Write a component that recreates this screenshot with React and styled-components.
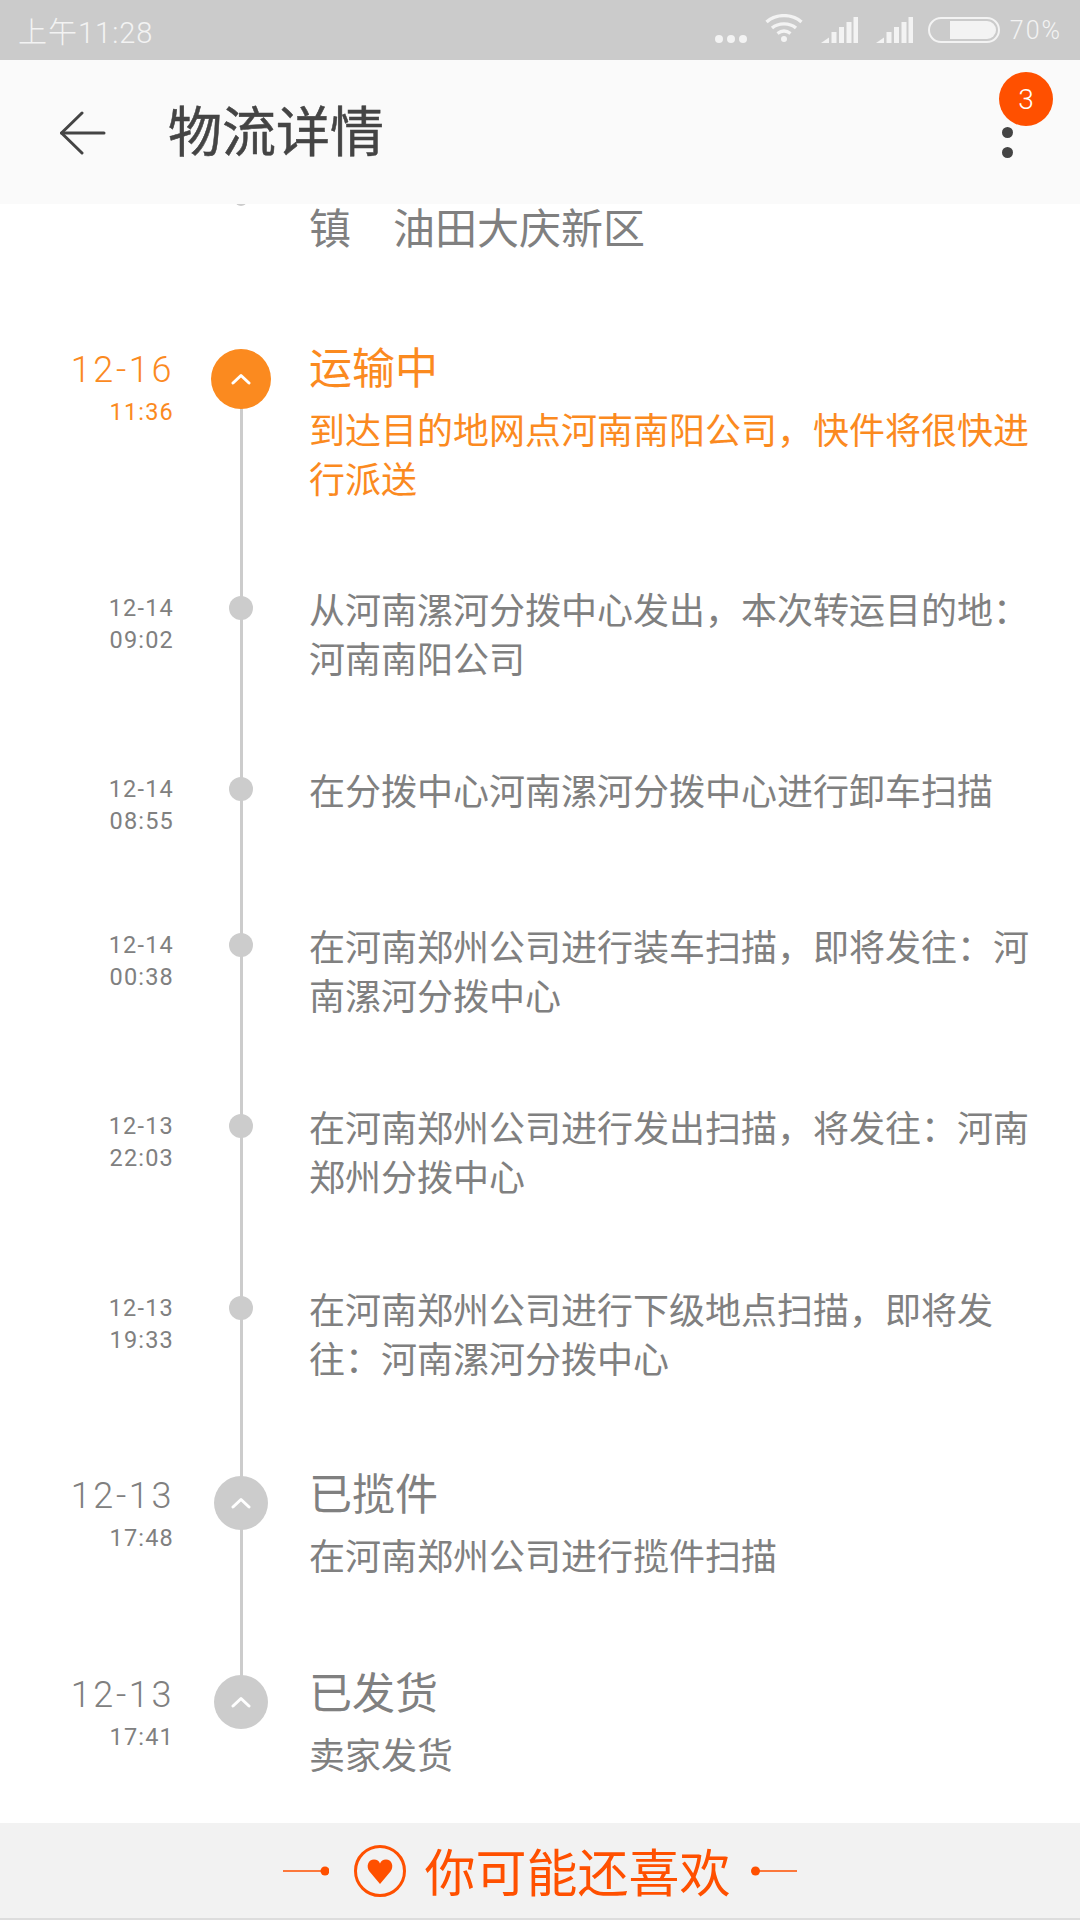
import React from 'react';
import styled, { createGlobalStyle } from 'styled-components';

const CJK = '"Noto Sans CJK SC", "Noto Sans", sans-serif';
const LATIN = 'Roboto, "Noto Sans CJK SC", sans-serif';
const ORANGE = '#fb8a1f';
const GREY = '#808080';
const NODE = '#cccccc';
const ACCENT = '#ff5000';

const Global = createGlobalStyle`
  html, body { margin: 0; padding: 0; background: #fff; }
  * { box-sizing: border-box; }
`;

const Page = styled.div`
  width: 1080px;
  height: 1920px;
  display: flex;
  flex-direction: column;
  overflow: hidden;
  background: #fff;
  font-family: ${CJK};
`;

const StatusBar = styled.div`
  height: 60px;
  flex: none;
  background: #cbcbcb;
  color: #f3f3f3;
  display: flex;
  align-items: center;
  padding: 0 18px 0 18px;
`;
const Clock = styled.div`
  font-family: ${LATIN};
  font-weight: 300;
  font-size: 29px;
  letter-spacing: 1px;
  flex: 1;
`;
const StatusIcons = styled.div`
  display: flex;
  align-items: center;
`;
const BatteryShell = styled.div`
  width: 72px;
  height: 26px;
  border: 2.5px solid #f3f3f3;
  border-radius: 13px;
  padding: 2px;
  margin-left: 15px;
  display: flex;
  justify-content: flex-end;
`;
const BatteryFill = styled.div`
  width: 46px;
  border-radius: 0 9px 9px 0;
  background: #f3f3f3;
`;
const Percent = styled.div`
  font-family: ${LATIN};
  font-weight: 300;
  font-size: 25px;
  letter-spacing: 2px;
  margin-left: 10px;
`;

const Header = styled.header`
  height: 144px;
  flex: none;
  background: #fafafa;
  display: flex;
  align-items: center;
  padding-left: 60px;
  position: relative;
  z-index: 1;
`;
const BackIcon = styled.svg`
  width: 46px;
  height: 44px;
  flex: none;
  margin-top: 2px;
`;
const Title = styled.h1`
  margin: -6px 0 0 62px;
  font-size: 54px;
  font-weight: 400;
  -webkit-text-stroke: 0.5px #444;
  color: #444;
  flex: 1;
  line-height: 1;
`;
const More = styled.div`
  width: 12px;
  margin: 20px 66px 0 0;
  display: flex;
  flex-direction: column;
  gap: 9px;
`;
const MoreDot = styled.span`
  width: 11px;
  height: 11px;
  border-radius: 50%;
  background: #444;
`;
const Badge = styled.div`
  position: absolute;
  left: 999px;
  top: 12px;
  width: 54px;
  height: 54px;
  border-radius: 50%;
  background: ${ACCENT};
  color: #fff;
  font-family: ${LATIN};
  font-weight: 300;
  font-size: 28px;
  display: flex;
  align-items: center;
  justify-content: center;
`;

const List = styled.main`
  flex: 1;
  min-height: 0;
  overflow: hidden;
`;
const Row = styled.section`
  display: grid;
  grid-template-columns: 174px 134px 732px;
  padding-bottom: ${p => p.$after}px;
  color: ${p => (p.$active ? ORANGE : GREY)};
`;
const TimeCol = styled.div`
  text-align: right;
  font-family: ${LATIN};
  padding-top: ${p => (p.$big ? 1 : 4)}px;
  min-height: 73px;
`;
const DateText = styled.div`
  font-weight: ${p => (p.$big ? 300 : 400)};
  font-size: ${p => (p.$big ? 36 : 23.5)}px;
  line-height: ${p => (p.$big ? 50 : 32)}px;
  letter-spacing: ${p => (p.$big ? 2.6 : 1.2)}px;
`;
const TimeText = styled.div`
  font-weight: 400;
  font-size: 23.5px;
  line-height: 32px;
  letter-spacing: 1.2px;
  margin-top: ${p => (p.$big ? 1 : 0)}px;
`;
const NodeCol = styled.div`
  position: relative;
  display: flex;
  justify-content: center;
  align-items: flex-start;
  &::before {
    content: '';
    display: ${p => (p.$rail ? 'block' : 'none')};
    position: absolute;
    left: 65.5px;
    top: 8px;
    bottom: ${p => -(p.$after + 10)}px;
    width: 3px;
    background: ${NODE};
  }
`;
const Dot = styled.div`
  position: relative;
  margin-top: ${p => p.$top}px;
  width: ${p => p.$size}px;
  height: ${p => p.$size}px;
  border-radius: 50%;
  background: ${p => (p.$active ? ORANGE : NODE)};
  display: flex;
  align-items: center;
  justify-content: center;
`;
const Content = styled.div`
  padding-left: 1px;
  margin-top: ${p => (p.$lead ? 0 : -4)}px;
`;
const Status = styled.div`
  font-size: 43px;
  line-height: 50px;
  margin: 0 0 14px 0;
`;
const Body = styled.div`
  font-size: ${p => (p.$lead ? 42 : 36)}px;
  line-height: ${p => (p.$lead ? 44 : 49)}px;
`;

const Footer = styled.footer`
  height: 97px;
  flex: none;
  background: #f2f2f2;
  border-bottom: 2px solid #dddddd;
  display: flex;
  align-items: center;
  justify-content: center;
  color: ${ACCENT};
`;
const FooterText = styled.div`
  font-size: 51px;
  line-height: 1;
  margin-left: 17px;
  margin-right: 20px;
`;
const Deco = styled.svg`
  width: 48px;
  height: 12px;
  flex: none;
`;
const HeartRing = styled.svg`
  width: 54px;
  height: 54px;
  flex: none;
  margin-left: 24px;
`;

const Chevron = () => (
  <svg width="20" height="12" viewBox="0 0 20 12" fill="none" stroke="#fff" strokeWidth="3" strokeLinecap="round" strokeLinejoin="round">
    <path d="M2 10 L10 2.5 L18 10" />
  </svg>
);

const Bars = () => (
  <svg width="37" height="26" viewBox="0 0 37 26" fill="#f3f3f3" style={{ marginLeft: 18 }}>
    <path d="M0 26 L8 20.5 V26 Z" />
    <rect x="10.5" y="15" width="5" height="11" />
    <rect x="18" y="10" width="5" height="16" />
    <rect x="25.5" y="5" width="5" height="21" />
    <rect x="32.5" y="0" width="4.5" height="26" />
  </svg>
);

const rows = [
  { date: '12-14', time: '09:02', body: '从河南漯河分拨中心发出，本次转运目的地：河南南阳公司', after: 87 },
  { date: '12-14', time: '08:55', body: '在分拨中心河南漯河分拨中心进行卸车扫描', after: 83 },
  { date: '12-14', time: '00:38', body: '在河南郑州公司进行装车扫描，即将发往：河南漯河分拨中心', after: 87 },
  { date: '12-13', time: '22:03', body: '在河南郑州公司进行发出扫描，将发往：河南郑州分拨中心', after: 88 },
  { date: '12-13', time: '19:33', body: '在河南郑州公司进行下级地点扫描，即将发往：河南漯河分拨中心', after: 88 },
];

export default function App() {
  return (
    <Page>
      <Global />
      <StatusBar>
        <Clock>上午11:28</Clock>
        <StatusIcons>
          <svg width="32" height="8" viewBox="0 0 32 8" fill="#f3f3f3" style={{ marginTop: 18 }}>
            <circle cx="4" cy="4" r="4" /><circle cx="16" cy="4" r="4" /><circle cx="28" cy="4" r="4" />
          </svg>
          <svg width="38" height="28" viewBox="0 0 38 28" fill="none" stroke="#f3f3f3" strokeWidth="3.4" style={{ marginLeft: 18, marginTop: -4 }}>
            <path d="M1.5 8 C11 -0.5 27 -0.5 36.5 8" />
            <path d="M7 14 C13.5 8.5 24.5 8.5 31 14" />
            <path d="M12.5 19.5 C16.5 16.5 21.5 16.5 25.5 19.5" />
            <circle cx="19" cy="25" r="3" fill="#f3f3f3" stroke="none" />
          </svg>
          <Bars />
          <Bars />
          <BatteryShell><BatteryFill /></BatteryShell>
          <Percent>70%</Percent>
        </StatusIcons>
      </StatusBar>

      <Header>
        <BackIcon viewBox="0 0 46 44" fill="none" stroke="#444" strokeWidth="3" strokeLinecap="round" strokeLinejoin="round">
          <path d="M22 2 L1.5 22 L22 42" />
          <path d="M1.5 22 H44" />
        </BackIcon>
        <Title>物流详情</Title>
        <More><MoreDot /><MoreDot /></More>
        <Badge>3</Badge>
      </Header>

      <List>
        <Row $after={67}>
          <TimeCol />
          <NodeCol>
            <Dot $size={12} $top={-10} />
          </NodeCol>
          <Content $lead><Body $lead>镇　油田大庆新区</Body></Content>
        </Row>

        <Row $active $after={86}>
          <TimeCol $big>
            <DateText $big>12-16</DateText>
            <TimeText $big>11:36</TimeText>
          </TimeCol>
          <NodeCol $rail $after={86}>
            <Dot $active $size={60} $top={5}><Chevron /></Dot>
          </NodeCol>
          <Content>
            <Status>运输中</Status>
            <Body>到达目的地网点河南南阳公司，快件将很快进行派送</Body>
          </Content>
        </Row>

        {rows.map(r => (
          <Row key={r.time} $after={r.after}>
            <TimeCol>
              <DateText>{r.date}</DateText>
              <TimeText>{r.time}</TimeText>
            </TimeCol>
            <NodeCol $rail $after={r.after}>
              <Dot $size={24} $top={8} />
            </NodeCol>
            <Content><Body>{r.body}</Body></Content>
          </Row>
        ))}

        <Row $after={90}>
          <TimeCol $big>
            <DateText $big>12-13</DateText>
            <TimeText $big>17:48</TimeText>
          </TimeCol>
          <NodeCol $rail $after={90}>
            <Dot $size={54} $top={6}><Chevron /></Dot>
          </NodeCol>
          <Content>
            <Status>已揽件</Status>
            <Body>在河南郑州公司进行揽件扫描</Body>
          </Content>
        </Row>

        <Row $after={38}>
          <TimeCol $big>
            <DateText $big>12-13</DateText>
            <TimeText $big>17:41</TimeText>
          </TimeCol>
          <NodeCol>
            <Dot $size={54} $top={6}><Chevron /></Dot>
          </NodeCol>
          <Content>
            <Status>已发货</Status>
            <Body>卖家发货</Body>
          </Content>
        </Row>
      </List>

      <Footer>
        <Deco viewBox="0 0 48 12" fill={ACCENT}>
          <rect x="2" y="5.25" width="42" height="1.5" />
          <circle cx="44" cy="6" r="4.5" />
        </Deco>
        <HeartRing viewBox="0 0 54 54" fill="none">
          <circle cx="27" cy="27" r="24.5" stroke={ACCENT} strokeWidth="3" />
          <path d="M27 40 L16.5 27.5 C12.5 22 15.5 15.5 21 15.5 C24 15.5 26 17 27 19.5 C28 17 30 15.5 33 15.5 C38.5 15.5 41.5 22 37.5 27.5 Z" fill={ACCENT} />
        </HeartRing>
        <FooterText>你可能还喜欢</FooterText>
        <Deco viewBox="0 0 48 12" fill={ACCENT}>
          <rect x="4" y="5.25" width="42" height="1.5" />
          <circle cx="4.5" cy="6" r="4.5" />
        </Deco>
      </Footer>
    </Page>
  );
}
